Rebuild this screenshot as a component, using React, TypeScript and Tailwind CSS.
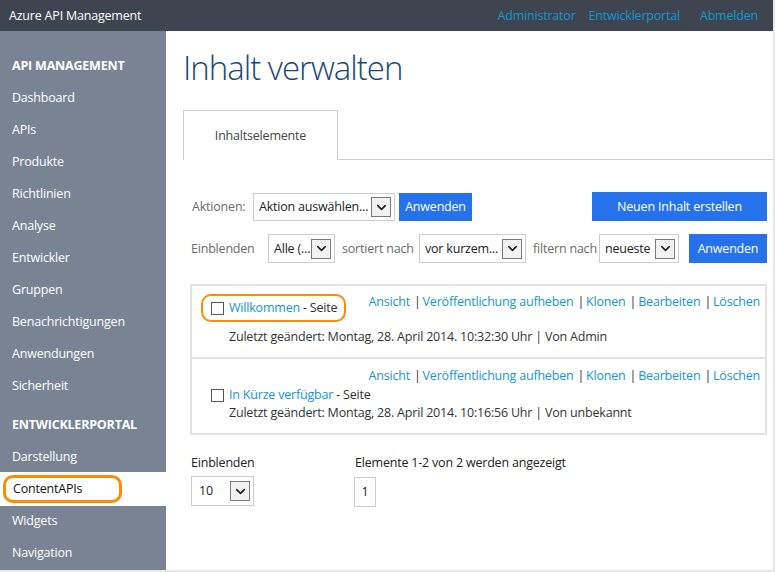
import { ChevronDown } from "lucide-react";

const navTop = [
  "Dashboard",
  "APIs",
  "Produkte",
  "Richtlinien",
  "Analyse",
  "Entwickler",
  "Gruppen",
  "Benachrichtigungen",
  "Anwendungen",
  "Sicherheit",
];

const actions = ["Ansicht", "Veröffentlichung aufheben", "Klonen", "Bearbeiten", "Löschen"];

function Select({ label, width }: { label: string; width: string }) {
  return (
    <div
      className={`${width} h-full flex items-center justify-between border border-[#cdcdcd] bg-white pl-[5px] pr-[3px] text-[#222]`}
    >
      <span className="overflow-hidden whitespace-nowrap">{label}</span>
      <span className="w-[20px] h-[20px] shrink-0 flex items-center justify-center border border-[#7a7a7a] bg-[#f2f2f2]">
        <ChevronDown size={15} strokeWidth={2.6} className="text-[#222]" />
      </span>
    </div>
  );
}

function Checkbox() {
  return <span className="w-[13px] h-[13px] shrink-0 border border-[#555] bg-white" />;
}

function ActionLinks() {
  return (
    <div className="flex items-center text-[#1496cf] whitespace-nowrap">
      {actions.map((a, i) => (
        <span key={a} className="flex items-center">
          {i > 0 && <span className="text-[#333] pl-[4px] pr-[2px]">|</span>}
          <span>{a}</span>
        </span>
      ))}
    </div>
  );
}

export default function App() {
  return (
    <div className="w-[775px] h-[572px] flex flex-col bg-white border-r-2 border-b-2 border-[#e8e8e8] font-['Open_Sans',sans-serif] text-[12.5px] tracking-[-0.2px] leading-[16px] overflow-hidden">
      {/* top bar */}
      <div className="h-[31px] shrink-0 bg-[#3e4550] flex items-center justify-between pl-[9px] pr-[15px]">
        <span className="text-white">Azure API Management</span>
        <div className="flex items-center text-[#1496cf]">
          <span>Administrator</span>
          <span className="ml-[13px]">Entwicklerportal</span>
          <span className="ml-[20px]">Abmelden</span>
        </div>
      </div>

      <div className="flex flex-1 min-h-0">
        {/* sidebar */}
        <aside className="w-[166px] shrink-0 bg-[#788494] text-white pt-[19px]">
          <div className="h-[32px] flex items-center px-[12px] font-bold">API MANAGEMENT</div>
          {navTop.map((n) => (
            <div key={n} className="h-[32px] flex items-center px-[12px]">
              {n}
            </div>
          ))}
          <div className="h-[32px] mt-[7px] flex items-center px-[12px] font-bold">ENTWICKLERPORTAL</div>
          <div className="h-[32px] flex items-center px-[12px]">Darstellung</div>
          <div className="h-[34px] -my-px flex items-center px-[3px] bg-white text-[#111]">
            <span className="w-[119px] h-[28px] flex items-center pl-[7px] border-[3px] border-[#ff8c00] rounded-[10px]">
              ContentAPIs
            </span>
          </div>
          <div className="h-[32px] flex items-center px-[12px]">Widgets</div>
          <div className="h-[32px] flex items-center px-[12px]">Navigation</div>
        </aside>

        {/* main */}
        <main className="flex-1 min-w-0 pl-[17px] pr-0">
          <h1 className="mt-[17px] h-[40px] text-[33px] leading-[40px] font-light text-[#1c4a78] tracking-[-1px]">
            Inhalt verwalten
          </h1>

          <div className="mt-[22px] flex h-[50px]">
            <div className="w-[155px] border-t border-l border-r border-[#cfcfcf] flex items-center justify-center text-[#444]">
              Inhaltselemente
            </div>
            <div className="flex-1 border-b border-[#cfcfcf]" />
          </div>

          <div className="pl-[8px] pr-[6px]">
            {/* actions row */}
            <div className="mt-[33px] h-[28px] flex items-center">
              <span className="text-[#6b6b6b] pl-px w-[62px]">Aktionen:</span>
              <Select label="Aktion auswählen..." width="w-[142px]" />
              <button className="ml-[4px] h-full w-[73px] bg-[#2672ec] text-white">Anwenden</button>
              <button className="ml-auto h-[29px] -mt-px w-[175px] bg-[#2672ec] text-white">
                Neuen Inhalt erstellen
              </button>
            </div>

            {/* filter row */}
            <div className="mt-[13px] h-[29px] flex items-center">
              <span className="text-[#6b6b6b] w-[77px]">Einblenden</span>
              <Select label="Alle (..." width="w-[67px]" />
              <span className="text-[#6b6b6b] ml-[7px] w-[77px] whitespace-nowrap">sortiert nach</span>
              <Select label="vor kurzem..." width="w-[107px]" />
              <span className="text-[#6b6b6b] ml-[7px] w-[66px] whitespace-nowrap">filtern nach</span>
              <Select label="neueste" width="w-[80px]" />
              <button className="ml-auto h-full w-[78px] bg-[#2672ec] text-white">Anwenden</button>
            </div>

            {/* list */}
            <div className="mt-[21px] -ml-px border-2 border-[#e3e3e3] text-[#333]">
              <div className="h-[73px] pt-[6px] border-b-2 border-[#e3e3e3]">
                <div className="flex items-start justify-between pr-[5px]">
                  <div className="ml-[9px] w-[145px] h-[28px] flex items-center gap-[5px] pl-[8px] border-2 border-[#ff8c00] rounded-[10px] mt-[2px] whitespace-nowrap">
                    <Checkbox />
                    <span>
                      <span className="text-[#1496cf]">Willkommen</span> - Seite
                    </span>
                  </div>
                  <div className="mt-[2px]">
                    <ActionLinks />
                  </div>
                </div>
                <div className="mt-[7px] pl-[37px]">
                  Zuletzt geändert: Montag, 28. April 2014. 10:32:30 Uhr | Von Admin
                </div>
              </div>
              <div className="h-[74px] pt-[9px]">
                <div className="flex justify-end pr-[5px]">
                  <ActionLinks />
                </div>
                <div className="mt-[3px] pl-[19px] flex items-center gap-[5px]">
                  <Checkbox />
                  <span>
                    <span className="text-[#1496cf]">In Kürze verfügbar</span> - Seite
                  </span>
                </div>
                <div className="mt-[2px] pl-[37px]">
                  Zuletzt geändert: Montag, 28. April 2014. 10:16:56 Uhr | Von unbekannt
                </div>
              </div>
            </div>

            {/* paging */}
            <div className="mt-[20px] flex text-[#222]">
              <div className="w-[164px]">
                <div>Einblenden</div>
                <div className="mt-[5px] h-[30px]">
                  <Select label="10" width="w-[63px] pl-[7px]" />
                </div>
              </div>
              <div>
                <div>Elemente 1-2 von 2 werden angezeigt</div>
                <div className="mt-[6px] w-[22px] h-[30px] border border-[#cdcdcd] flex items-center justify-center -ml-px">
                  1
                </div>
              </div>
            </div>
          </div>
        </main>
      </div>
    </div>
  );
}
